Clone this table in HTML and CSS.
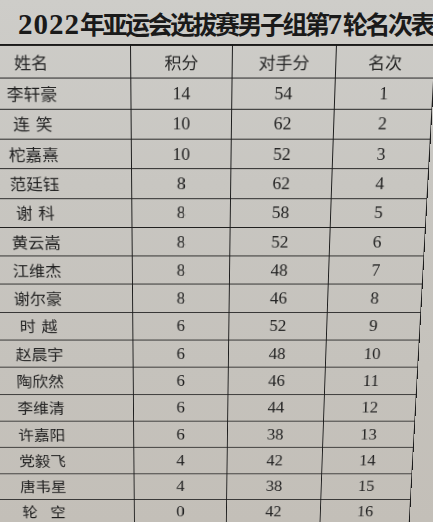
FILE: index.html
```html
<!DOCTYPE html>
<html lang="zh-CN">
<head>
<meta charset="utf-8">
<title>2022年亚运会选拔赛男子组第7轮名次表</title>
<link rel="stylesheet" href="styles.css">
</head>
<body>
<main class="page">
  <h1 class="title"><span class="num">2022</span>年亚运会选拔赛男子组第<span class="num">7</span>轮名次表</h1>
  <div class="sheet">
    <table class="rank">
      <colgroup>
        <col class="c-name"><col class="c-pts"><col class="c-opp"><col class="c-rank">
      </colgroup>
      <thead>
        <tr><th>姓名</th><th>积分</th><th>对手分</th><th>名次</th></tr>
      </thead>
      <tbody>
        <tr><td class="name">李轩豪</td><td>14</td><td>54</td><td>1</td></tr>
        <tr><td class="name">连<span class="sp"></span>笑</td><td>10</td><td>62</td><td>2</td></tr>
        <tr><td class="name">柁嘉熹</td><td>10</td><td>52</td><td>3</td></tr>
        <tr><td class="name">范廷钰</td><td>8</td><td>62</td><td>4</td></tr>
        <tr><td class="name">谢<span class="sp"></span>科</td><td>8</td><td>58</td><td>5</td></tr>
        <tr><td class="name">黄云嵩</td><td>8</td><td>52</td><td>6</td></tr>
        <tr><td class="name">江维杰</td><td>8</td><td>48</td><td>7</td></tr>
        <tr><td class="name">谢尔豪</td><td>8</td><td>46</td><td>8</td></tr>
        <tr><td class="name">时<span class="sp"></span>越</td><td>6</td><td>52</td><td>9</td></tr>
        <tr><td class="name">赵晨宇</td><td>6</td><td>48</td><td>10</td></tr>
        <tr><td class="name">陶欣然</td><td>6</td><td>46</td><td>11</td></tr>
        <tr><td class="name">李维清</td><td>6</td><td>44</td><td>12</td></tr>
        <tr><td class="name">许嘉阳</td><td>6</td><td>38</td><td>13</td></tr>
        <tr><td class="name">党毅飞</td><td>4</td><td>42</td><td>14</td></tr>
        <tr><td class="name">唐韦星</td><td>4</td><td>38</td><td>15</td></tr>
        <tr><td class="name">轮<span class="sp wide"></span>空</td><td>0</td><td>42</td><td>16</td></tr>
        <tr><td class="name"></td><td></td><td></td><td></td></tr>
      </tbody>
    </table>
  </div>
</main>
</body>
</html>
```
FILE: styles.css
```css
html, body {
  margin: 0;
  padding: 0;
}

body {
  width: 433px;
  height: 522px;
  overflow: hidden;
  background: linear-gradient(180deg, #cecdc9 0%, #c8c6c1 35%, #c5c2bc 70%, #c3bfb8 100%);
  color: #1d1d1d;
}

.page {
  width: 433px;
  height: 522px;
  overflow: hidden;
}

.title {
  margin: 0;
  height: 44px;
  padding-left: 18px;
  line-height: 46px;
  font-family: "Noto Sans CJK SC", sans-serif;
  font-size: 25px;
  font-weight: 700;
  letter-spacing: -2.5px;
  white-space: nowrap;
  overflow: hidden;
  color: #1a1a1a;
}

.title .num {
  font-family: "Liberation Serif", serif;
  font-size: 29px;
  font-weight: 700;
  letter-spacing: 1px;
}

.sheet {
  margin-left: -70px;
  width: 505px;
  transform-origin: 240px 0;
  transform: perspective(1294px) rotateX(-15deg);
}

.rank {
  border-collapse: collapse;
  table-layout: fixed;
  width: 505px;
}

.c-name { width: 200px; }
.c-pts { width: 102px; }
.c-opp { width: 104px; }
.c-rank { width: 99px; }

.rank th,
.rank td {
  border: 1.5px solid #1c1c1c;
  padding: 0;
  text-align: center;
  vertical-align: middle;
  font-family: "Liberation Serif", "Noto Sans CJK SC", serif;
  font-size: 18px;
  line-height: 20px;
  color: #222;
}

.rank thead tr {
  height: 34.9px;
}

.rank thead th {
  border-top: 2px solid #1a1a1a;
  font-family: "Noto Sans CJK SC", sans-serif;
  font-size: 17px;
  font-weight: 400;
  color: #262626;
}

.rank tbody tr {
  height: 32.3px;
}

.rank td.name {
  font-family: "Noto Sans CJK SC", sans-serif;
  font-size: 17px;
  color: #1f1f1f;
}

.sp {
  display: inline-block;
  width: 6px;
}

.sp.wide {
  width: 14px;
}
```
